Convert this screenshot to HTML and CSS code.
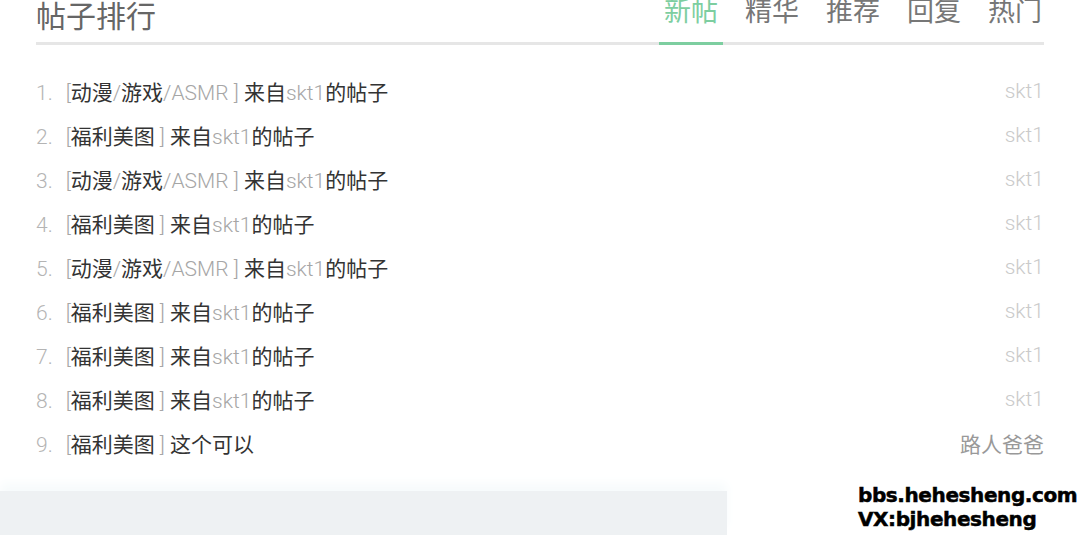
FILE: index.html
```html
<!DOCTYPE html>
<html lang="zh-CN">
<head>
    <meta charset="UTF-8">
    <meta name="viewport" content="width=device-width, initial-scale=1.0">
    <title>帖子排行</title>
    <link rel="stylesheet" href="styles.css">
</head>
<body>
    <!-- 帖子排行 -->
    <div class="rank">
        <div class="rank-head">
            <h2 class="rank-title">帖子排行</h2>
            <ul class="tabs">
                <li class="tab active">新帖</li>
                <li class="tab">精华</li>
                <li class="tab">推荐</li>
                <li class="tab">回复</li>
                <li class="tab">热门</li>
            </ul>
        </div>

        <ol class="rank-list">
            <li class="row"><span class="title"><span class="num">1.</span><span class="lat">[</span>动漫<span class="lat">/</span>游戏<span class="lat">/ASMR ]</span> 来自<span class="lat">skt1</span>的帖子</span><span class="author lat">skt1</span></li>
            <li class="row"><span class="title"><span class="num">2.</span><span class="lat">[</span>福利美图<span class="lat"> ]</span> 来自<span class="lat">skt1</span>的帖子</span><span class="author lat">skt1</span></li>
            <li class="row"><span class="title"><span class="num">3.</span><span class="lat">[</span>动漫<span class="lat">/</span>游戏<span class="lat">/ASMR ]</span> 来自<span class="lat">skt1</span>的帖子</span><span class="author lat">skt1</span></li>
            <li class="row"><span class="title"><span class="num">4.</span><span class="lat">[</span>福利美图<span class="lat"> ]</span> 来自<span class="lat">skt1</span>的帖子</span><span class="author lat">skt1</span></li>
            <li class="row"><span class="title"><span class="num">5.</span><span class="lat">[</span>动漫<span class="lat">/</span>游戏<span class="lat">/ASMR ]</span> 来自<span class="lat">skt1</span>的帖子</span><span class="author lat">skt1</span></li>
            <li class="row"><span class="title"><span class="num">6.</span><span class="lat">[</span>福利美图<span class="lat"> ]</span> 来自<span class="lat">skt1</span>的帖子</span><span class="author lat">skt1</span></li>
            <li class="row"><span class="title"><span class="num">7.</span><span class="lat">[</span>福利美图<span class="lat"> ]</span> 来自<span class="lat">skt1</span>的帖子</span><span class="author lat">skt1</span></li>
            <li class="row"><span class="title"><span class="num">8.</span><span class="lat">[</span>福利美图<span class="lat"> ]</span> 来自<span class="lat">skt1</span>的帖子</span><span class="author lat">skt1</span></li>
            <li class="row"><span class="title"><span class="num">9.</span><span class="lat">[</span>福利美图<span class="lat"> ]</span> 这个可以</span><span class="author cn">路人爸爸</span></li>
        </ol>
    </div>

    <!-- 底部 -->
    <div class="foot">
        <div class="foot-box"></div>
        <div class="mark">bbs.hehesheng.com<br>VX:bjhehesheng</div>
    </div>
</body>
</html>
```

FILE: styles.css
```css
body {
    margin: 0;
    font-family: Roboto, "Noto Sans CJK SC", sans-serif;
    color: #333;
    background: #fff;
    height: 535px;
    overflow: hidden;
}
.rank {
    margin: -8px 36px 0 36px;
}
.rank-head {
    display: flex;
    justify-content: space-between;
    align-items: flex-end;
    border-bottom: 3px solid #e6e6e6;
    height: 50px;
}
.rank-title {
    margin: 0;
    font-size: 30px;
    font-weight: 400;
    color: #666;
    line-height: 40px;
    align-self: flex-start;
    padding-top: 5px;
}
.tabs {
    list-style: none;
    margin: 0 -3px -3px 0;
    padding: 0;
    display: flex;
    gap: 17px;
}
.tab {
    font-size: 27px;
    color: #777;
    padding: 0 5px 12px 5px;
    line-height: 36px;
    border-bottom: 3px solid transparent;
}
.tab.active {
    color: #7dcea0;
    border-bottom-color: #7dcea0;
}
.rank-list {
    list-style: none;
    margin: 0;
    padding: 24px 0 0 0;
}
.row {
    display: flex;
    justify-content: space-between;
    align-items: center;
    height: 44px;
    font-size: 21px;
}
.num {
    color: #b4b4b4;
    font-weight: 300;
    margin-right: 13px;
}
.lat {
    color: #a6a6a6;
    font-weight: 300;
}
.author.lat {
    color: #cacaca;
}
.author.cn {
    color: #999;
}
.foot {
    position: relative;
    margin-top: 26px;
    height: 60px;
}
.foot-box {
    width: 727px;
    height: 44px;
    margin-top: 16px;
    background: #eef1f3;
    box-shadow: 0 -8px 10px #f7fbfc;
}
.mark {
    position: absolute;
    left: 858px;
    top: -8px;
    font-family: "DejaVu Sans", sans-serif;
    font-weight: 700;
    font-size: 20px;
    line-height: 24px;
    color: #000;
    letter-spacing: -0.4px;
    -webkit-text-stroke: 0.5px #000;
}
```
